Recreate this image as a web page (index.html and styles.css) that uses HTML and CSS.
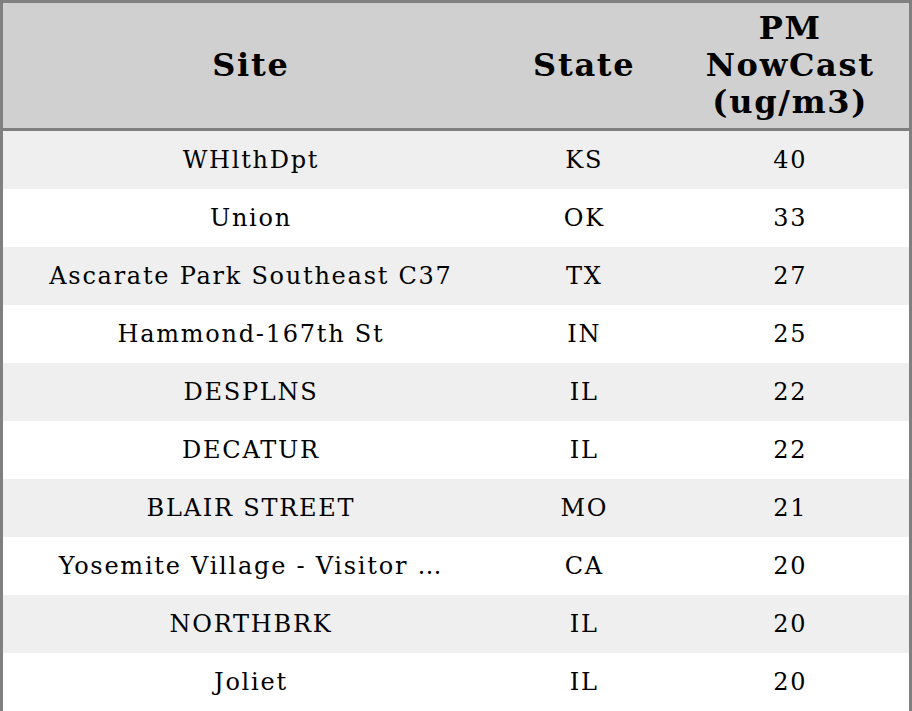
FILE: index.html
```html
<!DOCTYPE html>
<html>
<head>
<meta charset="utf-8">
<link rel="stylesheet" href="styles.css">
</head>
<body>
<table class="tbl">
  <colgroup>
    <col class="c-site">
    <col class="c-state">
    <col class="c-pm">
  </colgroup>
  <thead>
    <tr><th>Site</th><th>State</th><th>PM<br>NowCast<br>(ug/m3)</th></tr>
  </thead>
  <tbody>
    <tr><td>WHlthDpt</td><td>KS</td><td>40</td></tr>
    <tr><td>Union</td><td>OK</td><td>33</td></tr>
    <tr><td>Ascarate Park Southeast C37</td><td>TX</td><td>27</td></tr>
    <tr><td>Hammond-167th St</td><td>IN</td><td>25</td></tr>
    <tr><td>DESPLNS</td><td>IL</td><td>22</td></tr>
    <tr><td>DECATUR</td><td>IL</td><td>22</td></tr>
    <tr><td>BLAIR STREET</td><td>MO</td><td>21</td></tr>
    <tr><td>Yosemite Village - Visitor …</td><td>CA</td><td>20</td></tr>
    <tr><td>NORTHBRK</td><td>IL</td><td>20</td></tr>
    <tr><td>Joliet</td><td>IL</td><td>20</td></tr>
  </tbody>
</table>
</body>
</html>
```
FILE: styles.css
```css
html, body {
  margin: 0;
  padding: 0;
  background: #ffffff;
}
.tbl {
  width: 912px;
  height: 711px;
  border-collapse: collapse;
  border: 3px solid #808080;
  font-family: "DejaVu Serif", serif;
  color: #000;
  table-layout: fixed;
}
.c-site { width: 494px; }
.c-state { width: 172px; }
.c-pm { width: 240px; }
.tbl th {
  background: #d0d0d0;
  font-size: 32px;
  font-weight: bold;
  line-height: 37px;
  letter-spacing: 1.7px;
  height: 125px;
  padding: 0 0 0 1.7px;
  text-align: center;
  vertical-align: middle;
  border-bottom: 3px solid #808080;
}
.tbl td {
  font-size: 24px;
  letter-spacing: 1.75px;
  height: 58px;
  padding: 0 0 0 1.75px;
  text-align: center;
  vertical-align: middle;
}
.tbl tbody tr:nth-child(odd) td {
  background: #efefef;
}
```
